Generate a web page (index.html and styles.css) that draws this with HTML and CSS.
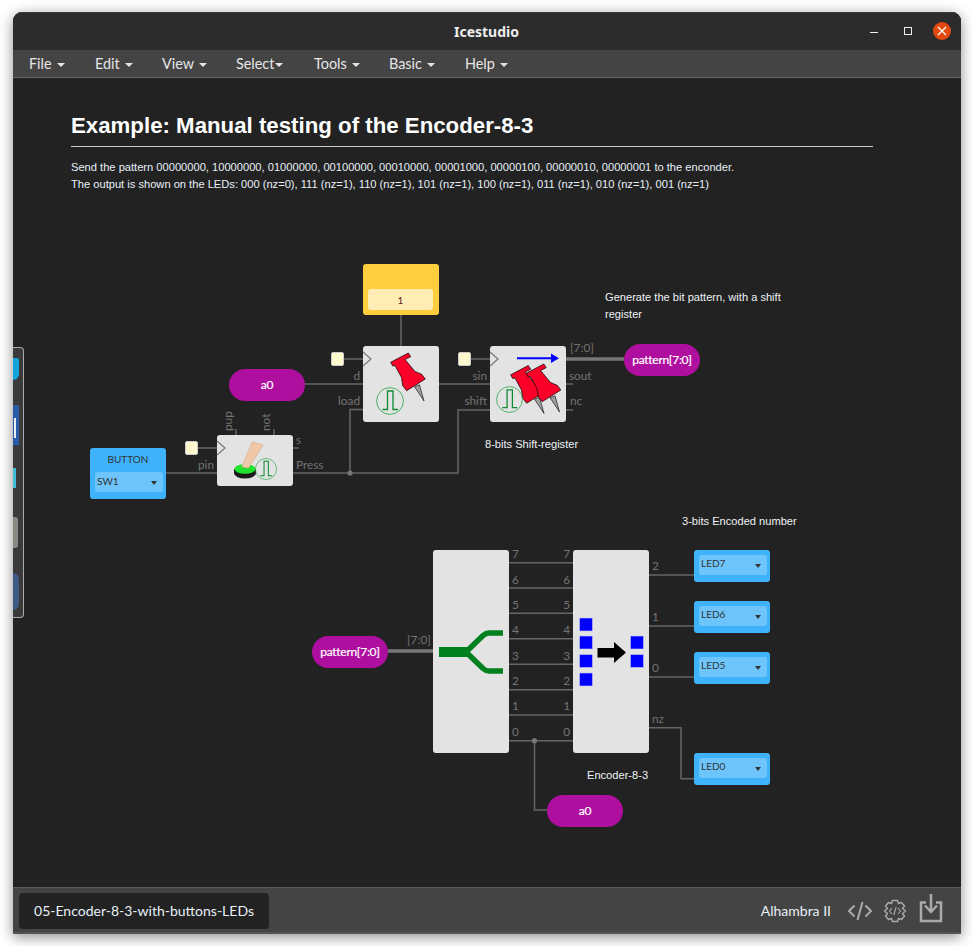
FILE: index.html
```html
<!DOCTYPE html>
<html lang="en">
<head>
    <meta charset="UTF-8">
    <meta name="viewport" content="width=device-width, initial-scale=1.0">
    <title>Icestudio</title>
    <link rel="stylesheet" href="styles.css">
</head>
<body>
    <div class="window">
        <header class="titlebar">
            <span class="app-name">Icestudio</span>
            <div class="win-buttons">
                <span class="win-min"></span>
                <span class="win-max"></span>
                <span class="win-close">
                    <svg width="10" height="10" viewBox="0 0 10 10"><path d="M1 1L9 9M9 1L1 9" stroke="#fff" stroke-width="1.2"/></svg>
                </span>
            </div>
        </header>

        <nav class="menubar">
            <span class="menu-item item-file">File <i class="caret"></i></span>
            <span class="menu-item item-edit">Edit <i class="caret"></i></span>
            <span class="menu-item item-view">View <i class="caret"></i></span>
            <span class="menu-item item-select">Select<i class="caret"></i></span>
            <span class="menu-item item-tools">Tools <i class="caret"></i></span>
            <span class="menu-item item-basic">Basic <i class="caret"></i></span>
            <span class="menu-item item-help">Help <i class="caret"></i></span>
        </nav>

        <main class="canvas">
            <h1 class="heading">Example: Manual testing of the Encoder-8-3</h1>
            <p class="intro">Send the pattern 00000000, 10000000, 01000000, 00100000, 00010000, 00001000, 00000100, 00000010, 00000001 to the enconder.</p>
            <p class="intro">The output is shown on the LEDs: 000 (nz=0), 111 (nz=1), 110 (nz=1), 101 (nz=1), 100 (nz=1), 011 (nz=1), 010 (nz=1), 001 (nz=1)</p>

            <!-- wires and port labels, drawn in window coordinates -->
            <svg class="wires" width="948" height="809" viewBox="13 78 948 809">
                <defs>
                    <symbol id="tack" viewBox="0 0 76 76" overflow="visible">
                        <path d="M51.500 40.700L56.500 38.800L61 55Z" fill="#a0a0a0" stroke="#000" stroke-width=".6"/>
                        <path d="M27.700 16.300L45.300 7L47.700 10.700L42 13.500L52 25.500L58.700 28.300L62.300 33L43.700 44.700L39.700 39.700L38.500 31.500L32 19.500L29.700 20Z" fill="#fb0028" stroke="#000" stroke-width=".7"/>
                    </symbol>
                    <symbol id="pulse" viewBox="0 0 28 28">
                        <circle cx="14" cy="14" r="13.400" fill="none" stroke="#3aaa58" stroke-width=".9"/>
                        <path d="M6.500 22.500H11.500V4H17V22.500H22" fill="none" stroke="#0a8a30" stroke-width="1.300"/>
                    </symbol>
                </defs>

                <g class="wire">
                    <path d="M198 448H217M344 359H363M471 359H490"/>
                    <path d="M166 473H217M293 473H458V410H490M350 473V409.500H363"/>
                    <path d="M305 384H363M439 384H490M401 315V346"/>
                    <path d="M236 429V435M274 429V435M293 448H299M566 384H573M566 410H573"/>
                    <path d="M509 562.700H573M509 588H573M509 613.300H573M509 638.700H573M509 664.300H573M509 689.700H573M509 715H573M509 740.700H573"/>
                    <path d="M649 575H694M649 626H694M649 677H694M649 727.700H681V778.700H694"/>
                    <path d="M534.500 740.700V810H547"/>
                </g>
                <path class="bus" d="M566 359H624M388 651H433"/>
                <circle class="joint" cx="350" cy="473" r="2.600"/>
                <circle class="joint" cx="534.500" cy="740.700" r="2.600"/>

                <g class="port">
                    <text x="198" y="469">pin</text>
                    <text x="296" y="469">Press</text>
                    <text x="296" y="444">s</text>
                    <text transform="translate(232 431) rotate(-90)">pup</text>
                    <text transform="translate(270 431) rotate(-90)">not</text>
                    <text class="end" x="360" y="380">d</text>
                    <text class="end" x="360" y="405">load</text>
                    <text class="end" x="487" y="380">sin</text>
                    <text class="end" x="487" y="405">shift</text>
                    <text x="570" y="352">[7:0]</text>
                    <text x="569" y="380">sout</text>
                    <text x="570" y="405">nc</text>
                    <text x="407" y="644">[7:0]</text>
                    <text x="512" y="558">7</text><text class="end" x="570" y="558">7</text>
                    <text x="512" y="584">6</text><text class="end" x="570" y="584">6</text>
                    <text x="512" y="609">5</text><text class="end" x="570" y="609">5</text>
                    <text x="512" y="634">4</text><text class="end" x="570" y="634">4</text>
                    <text x="512" y="660">3</text><text class="end" x="570" y="660">3</text>
                    <text x="512" y="685">2</text><text class="end" x="570" y="685">2</text>
                    <text x="512" y="710">1</text><text class="end" x="570" y="710">1</text>
                    <text x="512" y="736">0</text><text class="end" x="570" y="736">0</text>
                    <text x="652" y="570">2</text>
                    <text x="652" y="621">1</text>
                    <text x="652" y="672">0</text>
                    <text x="652" y="723">nz</text>
                </g>
            </svg>

            <div class="clk clk-toggle"></div>
            <div class="clk clk-dff"></div>
            <div class="clk clk-shift"></div>

            <div class="block input-btn">
                <span class="input-name">BUTTON</span>
                <div class="pin-select"><span>SW1</span><i class="pin-caret"></i></div>
            </div>

            <div class="block logic toggle">
                <svg width="76" height="51" viewBox="0 0 76 51">
                    <path class="chevron" d="M0 6L8 13L0 20"/>
                    <ellipse cx="28" cy="38" rx="11" ry="5.500" fill="#1a1a1a"/>
                    <rect x="17" y="34" width="22" height="4" fill="#1a1a1a"/>
                    <ellipse cx="28" cy="34" rx="10.500" ry="4.800" fill="#1fe32a"/>
                    <path d="M24.700 31.700L35.300 6.700L46.300 10L31.300 33.300Z" fill="#f0c8a8" stroke="#c9a58a" stroke-width=".5"/>
                    <use href="#pulse" x="38" y="23" width="22" height="22"/>
                </svg>
            </div>

            <div class="block constant">
                <div class="const-value">1</div>
            </div>

            <div class="block logic dff">
                <svg width="76" height="76" viewBox="0 0 76 76">
                    <path class="chevron" d="M0 6L8 13L0 20"/>
                    <use href="#tack" width="76" height="76"/>
                    <use href="#pulse" x="13" y="41" width="28" height="28"/>
                </svg>
            </div>

            <div class="block logic shift-reg">
                <svg width="76" height="76" viewBox="0 0 76 76">
                    <path class="chevron" d="M0 6L8 13L0 20"/>
                    <path d="M27 12.300H62" stroke="#0000ff" stroke-width="2"/>
                    <path d="M61 7.500L69 12.300L61 17Z" fill="#0000ff"/>
                    <use href="#tack" x="-7" y="12.500" width="76" height="76"/>
                    <use href="#tack" x="8.500" y="11" width="76" height="76"/>
                    <use href="#pulse" x="6" y="40" width="27" height="27"/>
                </svg>
            </div>

            <div class="block pill pill-a0-top">a0</div>
            <div class="block pill pill-pattern-top">pattern[7:0]</div>
            <div class="block pill pill-pattern-bot">pattern[7:0]</div>
            <div class="block pill pill-a0-bot">a0</div>

            <div class="block logic splitter">
                <svg width="76" height="203" viewBox="0 0 76 203">
                    <path d="M6 102H36" stroke="#00801f" stroke-width="10"/>
                    <path d="M34 101L50 85.500Q53 83 56 83H70M34 103L50 118.500Q53 121 56 121H70" fill="none" stroke="#00801f" stroke-width="5.500"/>
                </svg>
            </div>

            <div class="block logic encoder">
                <svg width="76" height="203" viewBox="0 0 76 203">
                    <g fill="#0000ff" stroke="#c8c8f0" stroke-width=".6">
                        <rect x="6.500" y="68" width="13" height="13"/>
                        <rect x="6.500" y="86" width="13" height="13"/>
                        <rect x="6.500" y="104.500" width="13" height="13"/>
                        <rect x="6.500" y="123" width="13" height="13"/>
                        <rect x="57.500" y="86" width="13" height="13"/>
                        <rect x="57.500" y="104.500" width="13" height="13"/>
                    </g>
                    <path d="M24.500 98H41V92L53 102.500L41 113V107.500H24.500Z" fill="#000"/>
                </svg>
            </div>

            <div class="block output led7"><div class="pin-select"><span>LED7</span><i class="pin-caret"></i></div></div>
            <div class="block output led6"><div class="pin-select"><span>LED6</span><i class="pin-caret"></i></div></div>
            <div class="block output led5"><div class="pin-select"><span>LED5</span><i class="pin-caret"></i></div></div>
            <div class="block output led0"><div class="pin-select"><span>LED0</span><i class="pin-caret"></i></div></div>

            <span class="note note-shift-name">8-bits Shift-register</span>
            <span class="note note-generate">Generate the bit pattern, with a shift<br>register</span>
            <span class="note note-encoded">3-bits Encoded number</span>
            <span class="note note-encoder-name">Encoder-8-3</span>
        </main>

        <footer class="statusbar">
            <div class="file-tab">05-Encoder-8-3-with-buttons-LEDs</div>
            <div class="status-right">
                <span class="board-name">Alhambra II</span>
                <svg class="code-icon" width="26" height="22" viewBox="0 0 26 22">
                    <path d="M7.500 5.500L2 11L7.500 16.500M18.500 5.500L24 11L18.500 16.500M15.500 2L10.500 20" fill="none" stroke="#aaa" stroke-width="2"/>
                </svg>
                <svg class="gear-icon" width="26" height="26" viewBox="0 0 26 26">
                    <path d="M10.500 2.500H15.500L16.500 5.500L19.500 4.500L22.500 8L20.500 10.500L23.500 13L20.500 15.500L22.500 18L19.500 21.500L16.500 20.500L15.500 23.500H10.500L9.500 20.500L6.500 21.500L3.500 18L5.500 15.500L2.500 13L5.500 10.500L3.500 8L6.500 4.500L9.500 5.500Z" fill="none" stroke="#aaa" stroke-width="1.500" stroke-linejoin="round"/>
                    <path d="M10 10L7.500 13L10 16M16 10L18.500 13L16 16M14.200 9L11.800 17" fill="none" stroke="#aaa" stroke-width="1.100"/>
                </svg>
                <svg class="save-icon" width="24" height="30" viewBox="0 0 24 30">
                    <path d="M7 9.500H2V28H22V9.500H17" fill="none" stroke="#aaa" stroke-width="2.500"/>
                    <path d="M12 1V18M6 12.500L12 19L18 12.500" fill="none" stroke="#aaa" stroke-width="2.500"/>
                </svg>
            </div>
        </footer>

        <!-- dock of the desktop, showing through at the left edge -->
        <div class="dock">
            <span class="dock-app dock-cyan"></span>
            <span class="dock-app dock-blue"></span>
            <span class="dock-app dock-teal"></span>
            <span class="dock-app dock-grey"></span>
            <span class="dock-app dock-navy"></span>
        </div>
    </div>
</body>
</html>
```

FILE: styles.css
```css
* {
    margin: 0;
    padding: 0;
    box-sizing: border-box;
}

body {
    background-color: #fff;
    height: 946px;
    padding: 12px 12px 0 13px;
    overflow: hidden;
    font-family: "Liberation Sans", Arial, sans-serif;
}

.window {
    position: relative;
    width: 948px;
    height: 922px;
    display: flex;
    flex-direction: column;
    background-color: #222;
    border-radius: 9px 9px 0 0;
    box-shadow: 0 3px 14px rgba(0,0,0,0.45);
    overflow: hidden;
}

/* title bar */
.titlebar {
    height: 38px;
    flex-shrink: 0;
    background-color: #2c2c2c;
    display: flex;
    align-items: center;
    justify-content: center;
    border-top: 1px solid #3a3a3a;
}

.app-name {
    color: #eee;
    font-family: "Noto Sans", sans-serif;
    font-weight: 700;
    font-size: 14px;
    margin-left: -1px;
}

.win-buttons {
    position: absolute;
    top: 10px;
    right: 10px;
    display: flex;
    align-items: center;
}

.win-min {
    width: 8px;
    height: 1px;
    background-color: #eee;
    margin-top: 3px;
    margin-right: 26px;
}

.win-max {
    width: 8px;
    height: 8px;
    border: 1px solid #eee;
    margin-right: 21px;
}

.win-close {
    width: 18px;
    height: 18px;
    border-radius: 50%;
    background-color: #e2490f;
    display: flex;
    align-items: center;
    justify-content: center;
}

/* menu */
.menubar {
    height: 28px;
    flex-shrink: 0;
    background-color: #444;
    border-bottom: 1px solid #666;
    display: flex;
    align-items: center;
    color: #e6e6e6;
    font-family: "Lato", sans-serif;
    font-size: 14.4px;
}

.menu-item {
    display: flex;
    align-items: center;
}

.item-file { margin-left: 16px; width: 66px; }
.item-edit { width: 67px; }
.item-view { width: 74px; }
.item-select { width: 78px; }
.item-tools { width: 75px; }
.item-basic { width: 76px; }

.caret {
    width: 0;
    height: 0;
    margin-left: 5px;
    margin-top: 2px;
    border-left: 4px solid transparent;
    border-right: 4px solid transparent;
    border-top: 4px solid #e6e6e6;
}

.item-select .caret {
    margin-left: 1px;
}

/* canvas */
.canvas {
    position: relative;
    flex: 1;
    padding: 33px 88px 0 58px;
    color: #eee;
}

.heading {
    color: #fff;
    font-size: 22.25px;
    line-height: 30px;
    padding-bottom: 5px;
    border-bottom: 1px solid #ccc;
    margin-bottom: 12px;
}

.intro {
    color: #e8f0f8;
    font-size: 11.13px;
    line-height: 17px;
}

.wires {
    position: absolute;
    left: 0;
    top: 0;
}

.wire {
    fill: none;
    stroke: #666;
    stroke-width: 1.5;
}

.bus {
    fill: none;
    stroke: #777;
    stroke-width: 3.5;
}

.joint {
    fill: #777;
}

.port {
    fill: #737373;
    font-family: "Lato", sans-serif;
    font-size: 11.8px;
}

.port .end {
    text-anchor: end;
}

.chevron {
    fill: none;
    stroke: #777;
    stroke-width: 1.2;
}

.clk {
    position: absolute;
    width: 13px;
    height: 14px;
    background-color: #fffacd;
    border: 1px solid #ccc;
    border-radius: 2px;
}

.clk-toggle { left: 172px; top: 363px; }
.clk-dff { left: 318px; top: 274px; }
.clk-shift { left: 445px; top: 274px; }

/* blocks: left = page x - 13, top = page y - 78 */
.block {
    position: absolute;
    width: 76px;
    border-radius: 3px;
}

.block svg {
    display: block;
    overflow: visible;
}

.logic {
    background-color: #e3e3e3;
}

.toggle { left: 204px; top: 357px; height: 51px; }
.dff { left: 350px; top: 268px; height: 76px; }
.shift-reg { left: 477px; top: 268px; height: 76px; }
.splitter { left: 420px; top: 472px; height: 203px; }
.encoder { left: 560px; top: 472px; height: 203px; }

.input-btn,
.output {
    background-color: #3eb2fb;
    color: #333;
    font-family: "Lato", sans-serif;
    font-size: 10px;
}

.input-btn {
    left: 77px;
    top: 370px;
    height: 51px;
    padding: 5px;
    text-align: center;
}

.input-name {
    display: block;
    height: 19px;
    line-height: 13px;
}

.output {
    left: 681px;
    height: 32px;
    padding: 5px 3px 7px 5px;
}

.led7 { top: 472px; }
.led6 { top: 523px; }
.led5 { top: 574px; }
.led0 { top: 675px; }

.pin-select {
    position: relative;
    height: 20px;
    background-color: #6ec5fc;
    border-radius: 3px;
    padding-left: 2px;
    line-height: 18px;
    text-align: left;
    margin-right: -2px;
}

.output .pin-select {
    margin-right: 0;
    line-height: 17px;
}

.pin-caret {
    position: absolute;
    right: 6px;
    top: 9px;
    width: 0;
    height: 0;
    border-left: 3.5px solid transparent;
    border-right: 3.5px solid transparent;
    border-top: 4px solid #333;
}

.constant {
    left: 350px;
    top: 186px;
    height: 51px;
    padding: 25px 6px 5px 5px;
    background-color: #ffce3e;
}

.const-value {
    height: 21px;
    background-color: #ffedb5;
    border-radius: 3px;
    text-align: center;
    color: #5a1c1c;
    font-family: "Lato", sans-serif;
    font-size: 10px;
    line-height: 22px;
}

.pill {
    height: 32px;
    border-radius: 16px;
    background-color: #ae0f9e;
    color: #fff;
    font-family: "Lato", sans-serif;
    font-size: 12px;
    letter-spacing: -0.3px;
    -webkit-text-stroke: 0.2px #fff;
    line-height: 32px;
    text-align: center;
}

.pill-a0-top { left: 216px; top: 291px; }
.pill-pattern-top { left: 611px; top: 266px; }
.pill-pattern-bot { left: 299px; top: 558px; }
.pill-a0-bot { left: 534px; top: 717px; }

.note {
    position: absolute;
    color: #eef2f5;
    font-size: 11.1px;
    line-height: 17px;
    white-space: nowrap;
}

.note-shift-name { left: 472px; top: 358px; }
.note-generate { left: 592px; top: 211px; }
.note-encoded { left: 669px; top: 435px; }
.note-encoder-name { left: 574px; top: 689px; }

/* footer */
.statusbar {
    height: 47px;
    flex-shrink: 0;
    background-color: #444;
    border-top: 1px solid #5a5a5a;
    border-bottom: 2px solid #555;
    display: flex;
    align-items: center;
    justify-content: space-between;
    padding: 1px 18px 0 6px;
}

.file-tab {
    width: 250px;
    height: 36px;
    background-color: #222;
    border-radius: 4px;
    color: #e8f0f8;
    font-family: "Lato", sans-serif;
    font-size: 14px;
    line-height: 35px;
    text-align: center;
}

.status-right {
    display: flex;
    align-items: center;
    color: #e8f0f8;
    font-family: "Lato", sans-serif;
    font-size: 14px;
}

.board-name { margin-right: 16px; }
.code-icon { margin-right: 9px; }
.gear-icon { margin-right: 11px; }
.save-icon { margin-top: -6px; }

/* dock */
.dock {
    position: absolute;
    left: 0;
    top: 335px;
    width: 11px;
    height: 271px;
    background-color: #3a3a3a;
    border: 1px solid #aaa;
    border-left: none;
    border-radius: 0 4px 4px 0;
}

.dock-app {
    position: absolute;
    left: 0;
}

.dock-cyan { top: 10px; width: 6px; height: 22px; background-color: #12a5dd; border-radius: 0 3px 8px 0; }
.dock-blue { top: 57px; width: 6px; height: 40px; background-color: #2a5aa8; border-left: 1px solid #2a5aa8; }
.dock-blue::after { content: ""; display: block; width: 2px; height: 20px; margin-top: 13px; background-color: #e8eef8; }
.dock-teal { top: 120px; width: 3px; height: 20px; background-color: #44bcd8; }
.dock-grey { top: 169px; width: 5px; height: 31px; background-color: #8a8a85; border-radius: 0 3px 3px 0; }
.dock-navy { top: 225px; width: 6px; height: 37px; background-color: #3d5a85; border-radius: 0 18px 18px 0; }
```
